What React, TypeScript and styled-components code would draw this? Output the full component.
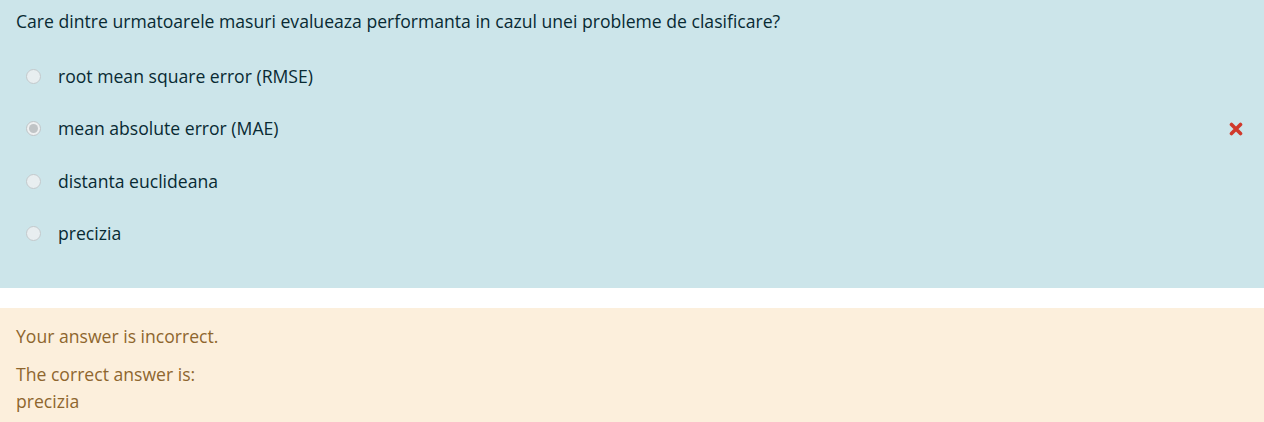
import React from "react";
import styled, { createGlobalStyle } from "styled-components";

const Global = createGlobalStyle`
  html, body { margin: 0; padding: 0; background: #ffffff; }
  body { font-family: "Open Sans", "Noto Sans", sans-serif; font-size: 17.6px; line-height: 27px; }
`;

const Page = styled.div`
  display: flex;
  flex-direction: column;
  gap: 20px;
  width: 1264px;
`;

const Formulation = styled.div`
  background: #cce5ea;
  color: #082a33;
  padding: 7.5px 16px 40.5px 16px;
  display: flex;
  flex-direction: column;
  gap: 28px;
`;

const QText = styled.div`
  margin: 0;
`;

const Answers = styled.div`
  display: flex;
  flex-direction: column;
  gap: 25.67px;
`;

const Row = styled.div`
  display: flex;
  align-items: center;
  height: 27px;
  position: relative;
`;

const Radio = styled.span<{ $checked?: boolean }>`
  box-sizing: border-box;
  flex: none;
  width: 15px;
  height: 15px;
  border-radius: 50%;
  margin-left: 10px;
  margin-right: 17px;
  border: 1px solid ${(p) => (p.$checked ? "#bfc5c8" : "#c3c9cc")};
  background: ${(p) => (p.$checked ? "#eef0f1" : "#e8eef0")};
  display: flex;
  align-items: center;
  justify-content: center;
  &::after {
    content: "";
    display: ${(p) => (p.$checked ? "block" : "none")};
    width: 9px;
    height: 9px;
    border-radius: 50%;
    background: #c0c4c6;
  }
`;

const Label = styled.span``;

const Mark = styled.span`
  position: absolute;
  right: 5px;
  top: 50%;
  transform: translateY(-50%);
  display: flex;
`;

const Feedback = styled.div`
  background: #fcefdc;
  color: #8e662e;
  padding: 15.5px 16px 20px 16px;
`;

const FbLine = styled.p`
  margin: 0 0 11px 0;
`;

const Right = styled.div``;

const Cross = () => (
  <svg width="14" height="14" viewBox="0 0 14 14">
    <path d="M2.5 2.5 L11.5 11.5 M11.5 2.5 L2.5 11.5" stroke="#d0392b" strokeWidth="3.6" strokeLinecap="round" />
  </svg>
);

const options = [
  { text: "root mean square error (RMSE)" },
  { text: "mean absolute error (MAE)", checked: true, wrong: true },
  { text: "distanta euclideana" },
  { text: "precizia" },
];

export default function App() {
  return (
    <>
      <Global />
      <Page>
        <Formulation>
          <QText>Care dintre urmatoarele masuri evalueaza performanta in cazul unei probleme de clasificare?</QText>
          <Answers>
            {options.map((o) => (
              <Row key={o.text}>
                <Radio $checked={o.checked} />
                <Label>{o.text}</Label>
                {o.wrong && (
                  <Mark>
                    <Cross />
                  </Mark>
                )}
              </Row>
            ))}
          </Answers>
        </Formulation>
        <Feedback>
          <FbLine>Your answer is incorrect.</FbLine>
          <Right>
            The correct answer is:
            <br />
            precizia
          </Right>
        </Feedback>
      </Page>
    </>
  );
}
